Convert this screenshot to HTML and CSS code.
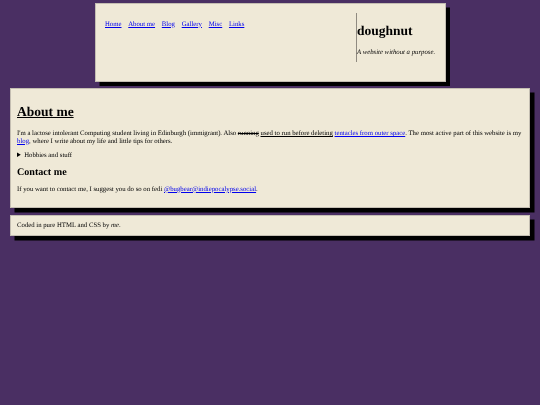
FILE: index.html
```html
<!DOCTYPE html>
<html lang="en">
<head>
    <meta charset="UTF-8">
    <meta name="viewport" content="width=device-width, initial-scale=1.0">
    <title>doughnut</title>
    <link rel="stylesheet" href="styles.css">
</head>
<body>

    <header class="header box">
        <nav class="nav">
            <a href="#">Home</a>
            <a href="#">About me</a>
            <a href="#">Blog</a>
            <a href="#">Gallery</a>
            <a href="#">Misc</a>
            <a href="#">Links</a>
        </nav>
        <div class="brand">
            <h1>doughnut</h1>
            <p><em>A website without a purpose.</em></p>
        </div>
    </header>

    <main class="content box">
        <h2 class="page-title">About me</h2>
        <p>I'm a lactose intolerant Computing student living in Edinburgh (immigrant). Also <s>running</s> <u>used to run before deleting</u> <a href="#">tentacles from outer space</a>. The most active part of this website is my <a href="#">blog</a>, where I write about my life and little tips for others.</p>
        <details>
            <summary>Hobbies and stuff</summary>
        </details>
        <h3>Contact me</h3>
        <p>If you want to contact me, I suggest you do so on fedi <a href="#">@bugbear@indiepocalypse.social</a>.</p>
    </main>

    <footer class="footer box">
        <p>Coded in pure HTML and CSS by <em>me</em>.</p>
    </footer>

</body>
</html>
```

FILE: styles.css
```css
body {
    margin: 0;
    padding: 3px 0 20px;
    background-color: #4a2f63;
    color: #000;
    font-family: "Liberation Serif", "Times New Roman", serif;
    font-size: 6.75px;
    line-height: 7.75px;
    text-rendering: geometricPrecision;
}

a {
    color: #0000ee;
}

p {
    margin: 0;
}

.box {
    background-color: #efe9d7;
    border: 1px solid #c4beb2;
    box-shadow: 4.5px 4.5px 0 #000;
    box-sizing: border-box;
    filter: blur(0.4px);
}

.header {
    display: flex;
    justify-content: space-between;
    width: 351px;
    height: 78.5px;
    margin: 0 auto 6.5px;
    padding: 9px 0 0 9.5px;
}

.nav {
    display: flex;
    gap: 6.75px;
    padding-top: 7.5px;
}

.brand {
    width: 87.5px;
    height: 49px;
    border-left: 1px solid #8f8a80;
}

.brand h1 {
    margin: 10px 0 10px;
    font-size: 13.5px;
    line-height: 16px;
}

.content {
    height: 120px;
    margin: 0 10px 6.5px;
    padding: 0 6px;
}

.page-title {
    margin: 15px 0 10px;
    font-size: 13.5px;
    line-height: 16px;
    text-decoration: underline;
}

.content p {
    margin-bottom: 6.75px;
}

summary {
    margin-bottom: 7px;
}

h3 {
    margin: 0 0 6.75px;
    font-size: 10.1px;
    line-height: 12px;
}

.footer {
    height: 21.5px;
    margin: 0 10px;
    padding: 6px;
}
```
